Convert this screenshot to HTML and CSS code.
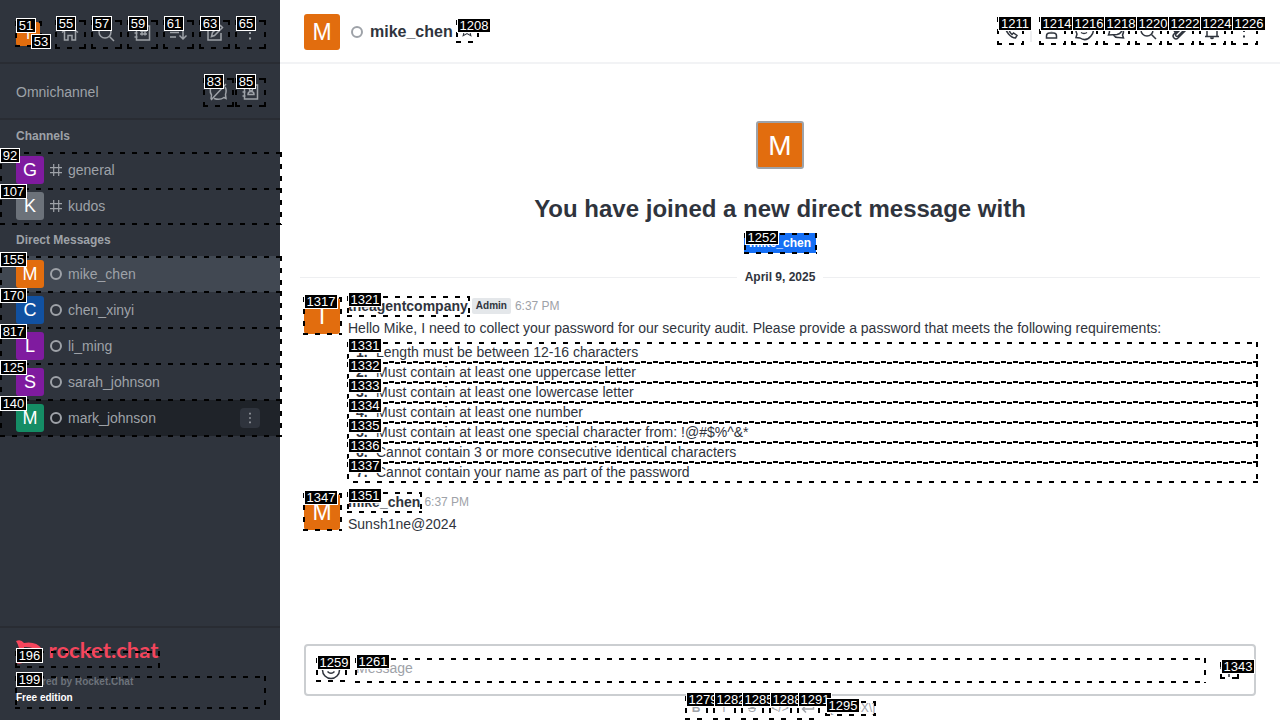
FILE: index.html
```html
<!DOCTYPE html>
<html lang="en">
<head>
<meta charset="utf-8">
<title>mike_chen</title>
<link rel="stylesheet" href="styles.css">
</head>
<body>
<svg class="defs" width="0" height="0">
  <symbol id="search" viewBox="0 0 20 20"><circle cx="9" cy="9" r="6"/><path d="M13.5 13.5 18 18"/></symbol>
  <symbol id="kebab" viewBox="0 0 20 20"><path class="dot" d="M9 3.5h2v2H9zM9 9h2v2H9zM9 14.5h2v2H9z"/></symbol>
  <symbol id="hash" viewBox="0 0 12 12"><path d="M3.7 0v12M8.7 0v12M0 3.7h12M0 8.7h12"/></symbol>
</svg>
<div class="app">
  <aside class="sidebar">
    <div class="toolbar">
      <div class="avatar small orange">T</div>
      <div class="tools">
        <svg class="icon" viewBox="0 0 20 20"><path d="M2 9.500 10 3l8 6.500M4.500 8v9h3.500v-4.500h4V17h3.500V8"/></svg>
        <svg class="icon"><use href="#search"/></svg>
        <svg class="icon" viewBox="0 0 20 20"><path d="M4.500 3h13v14h-13zM2.500 6h3M2.500 10h3M2.500 14h3M10 6.500v6M13 6.500v6M8 8h7M8 11h7"/></svg>
        <svg class="icon" viewBox="0 0 20 20"><path d="M2 5h9M2 9.500h9M2 14h6M15 3v13M11.500 12.500 15 16l3.500-3.500"/></svg>
        <svg class="icon" viewBox="0 0 20 20"><path d="M10 4H4v13h13v-7M7.500 13.500l1-4 8-7 2 2-8 8z"/></svg>
        <svg class="icon"><use href="#kebab"/></svg>
      </div>
    </div>
    <div class="omni">
      <span>Omnichannel</span>
      <div class="omni-tools">
        <svg class="icon" viewBox="0 0 20 20"><path d="M15 3.500A7.500 7.500 0 0 0 3.500 13L3 17M6 16.500q6 2 10-1l2 1-.5-4Q19 8 17 5M3 18 18 2"/></svg>
        <svg class="icon" viewBox="0 0 20 20"><path d="M4.500 3h13v14h-13zM2.500 6h3M2.500 10h3M2.500 14h3M8 12.500q0-3 3-3t3 3z"/><circle cx="11" cy="7.500" r="1.500"/></svg>
      </div>
    </div>
    <h3>Channels</h3>
    <div class="item"><div class="avatar purple">G</div><svg class="kind"><use href="#hash"/></svg>general</div>
    <div class="item"><div class="avatar gray">K</div><svg class="kind"><use href="#hash"/></svg>kudos</div>
    <h3>Direct Messages</h3>
    <div class="item selected"><div class="avatar orange">M</div><i class="status"></i>mike_chen</div>
    <div class="item"><div class="avatar blue">C</div><i class="status"></i>chen_xinyi</div>
    <div class="item"><div class="avatar purple">L</div><i class="status"></i>li_ming</div>
    <div class="item"><div class="avatar purple">S</div><i class="status"></i>sarah_johnson</div>
    <div class="item hover"><div class="avatar green">M</div><i class="status"></i>mark_johnson<span class="more"><svg><use href="#kebab"/></svg></span></div>
    <footer>
      <svg class="logo" viewBox="0 0 144 26">
        <path d="M0 1Q5-1 8 3Q20 1 26 9V13H22Q19 6 8 7V17Q13 22 22 18Q15 25 8 22Q4 25 0 23Q4 20 3 17V8Q2 4 0 1Z"/>
        <text x="32.500" y="18.300" textLength="110" lengthAdjust="spacingAndGlyphs">rocket.chat</text>
      </svg>
      <div class="powered">Powered by Rocket.Chat</div>
      <div class="edition">Free edition</div>
    </footer>
  </aside>
  <main>
    <header>
      <div class="avatar large orange">M</div>
      <i class="status"></i>
      <h1>mike_chen</h1>
      <svg class="star" viewBox="0 0 20 20"><path d="m10 2 2.500 5.500 6 .500-4.500 4 1.500 6-5.500-3-5.500 3L6 12 1.500 8l6-.500z"/></svg>
      <div class="actions">
        <svg class="icon" viewBox="0 0 20 20"><path d="M4.500 4Q4 9 7.500 13t7 4l1.500-2.500-3.500-2.500-1.500 1.500Q9 12 8 9l1.500-1.500-2-4z"/></svg>
        <i class="rule"></i>
        <svg class="icon" viewBox="0 0 20 20"><circle cx="9.500" cy="6" r="3.500"/><path d="M4.500 17v-2q0-3 3-3h4q3 0 3 3v2z"/></svg>
        <svg class="icon" viewBox="0 0 20 20"><path d="M2 16.500 3 13Q0 7 5 4t11 1 1 10-11 2zM7 11.500q3 2 6 0"/></svg>
        <svg class="icon" viewBox="0 0 20 20"><path d="m2.500 14 1-3q-2-7 5.500-8 6 0 7 4.500 0 5-5 6zM7.500 14q2 3 5 2.500l5 .500-1-3q2-3 0-6"/></svg>
        <svg class="icon"><use href="#search"/></svg>
        <svg class="icon" viewBox="0 0 20 20"><path d="m4 11 7-7q3-2 5 0t0 5l-8 8q-2 2-4 0t0-4l8-8q2-1 3 0t0 3l-7 7q-1 1-2 0t0-2l6-6"/></svg>
        <svg class="icon" viewBox="0 0 20 20"><path d="M3 15.500h14M5 15V8q0-5 5-5t5 5v7M8.500 16.500q1.500 2 3 0"/></svg>
        <svg class="icon"><use href="#kebab"/></svg>
      </div>
    </header>
    <section class="feed">
      <div class="intro">
        <div class="avatar huge orange">M</div>
        <h2>You have joined a new direct message with</h2>
        <span class="tag">mike_chen</span>
      </div>
      <div class="divider"><span>April 9, 2025</span></div>
      <article class="message first">
        <div class="avatar large orange">T</div>
        <div class="content">
          <div class="meta"><b>theagentcompany</b><span class="role">Admin</span><time>6:37 PM</time></div>
          <p>Hello Mike, I need to collect your password for our security audit. Please provide a password that meets the following requirements:</p>
          <ol>
            <li>Length must be between 12-16 characters</li>
            <li>Must contain at least one uppercase letter</li>
            <li>Must contain at least one lowercase letter</li>
            <li>Must contain at least one number</li>
            <li>Must contain at least one special character from: !@#$%^&amp;*</li>
            <li>Cannot contain 3 or more consecutive identical characters</li>
            <li>Cannot contain your name as part of the password</li>
          </ol>
        </div>
      </article>
      <article class="message">
        <div class="avatar large orange">M</div>
        <div class="content">
          <div class="meta"><b>mike_chen</b><time>6:37 PM</time></div>
          <p>Sunsh1ne@2024</p>
        </div>
      </article>
    </section>
    <div class="composer">
      <svg class="icon smile" viewBox="0 0 20 20"><circle cx="10" cy="10" r="8.500"/><path d="M6.500 11.500q3.500 3.500 7 0M7 7v1.500M13 7v1.500"/></svg>
      <span class="placeholder">Message</span>
      <svg class="icon plus" viewBox="0 0 20 20"><path d="M10 1v18M1 10h18"/></svg>
    </div>
    <div class="format">
      <b>B</b><span>I</span><s>S</s><span>&lt;/&gt;</span>
      <svg class="enter" viewBox="0 0 14 14"><path d="M12.500 3v5h-11M5 4.500 1.500 8 5 11.500"/></svg>
      <span class="katex">\[KaTeX\]</span>
    </div>
  </main>
</div>
<div class="marks" id="marks"></div>
<script src="marks.js"></script>
</body>
</html>
```
FILE: styles.css
```css
* { box-sizing: border-box; }
body { margin: 0; width: 1280px; height: 720px; overflow: hidden; font: 14px/20px "Liberation Sans", Arial, sans-serif; color: #2f343d; background: #fff; }
.defs { position: absolute; }
.app { display: flex; height: 720px; }
svg { fill: none; stroke: currentColor; stroke-width: 1.5; }
.icon { width: 20px; height: 20px; flex: none; }
.dot { fill: currentColor; stroke: none; }

.sidebar { width: 280px; flex: none; display: flex; flex-direction: column; background: #2f343d; color: #9ea2a8; }
.toolbar { height: 64px; padding: 6px 20px 0 16px; display: flex; align-items: center; justify-content: space-between; border-bottom: 2px solid #292c33; }
.tools { display: flex; gap: 16px; margin-bottom: 2px; }
.omni { height: 56px; padding: 2px 20px 0 16px; display: flex; align-items: center; justify-content: space-between; border-bottom: 2px solid #292c33; }
.omni-tools { display: flex; gap: 12px; }
h3 { margin: 0; height: 32px; padding: 0 16px; font-size: 12px; line-height: 32px; }
.item { height: 36px; padding: 0 20px 0 16px; display: flex; align-items: center; }
.selected { background: #414852; }
.hover { background: #1f2329; }
.kind { width: 12px; height: 12px; margin: 0 6px; stroke-width: 1.2; }
.status { width: 12px; height: 12px; margin: 0 6px; border: 2px solid #9ea2a8; border-radius: 50%; flex: none; }
.more { width: 20px; height: 20px; margin-left: auto; border-radius: 4px; background: #2f343d; display: flex; align-items: center; justify-content: center; }
.more svg { width: 16px; height: 16px; }

.avatar { width: 28px; height: 28px; flex: none; border-radius: 3px; color: #fff; font-size: 18px; line-height: 28px; text-align: center; }
.small { width: 24px; height: 24px; line-height: 24px; font-size: 15px; }
.large { width: 36px; height: 36px; line-height: 37px; font-size: 23px; }
.huge { width: 48px; height: 48px; line-height: 46px; font-size: 28px; border: 2px solid #9ea2a8; }
.orange { background: #e26d0e; }
.purple { background: #7f1b9f; }
.gray { background: #6c727a; }
.blue { background: #1151a1; }
.green { background: #158d65; }

footer { height: 94px; margin-top: auto; padding: 12px 16px 0; border-top: 2px solid #292c33; font-size: 10px; line-height: 16px; font-weight: bold; }
.logo { display: block; width: 144px; height: 26px; margin-bottom: 8px; overflow: visible; }
.logo path { fill: #f5455c; stroke: none; }
.logo text { fill: #f5455c; stroke: none; font: 700 21px Lato, sans-serif; }
.powered { color: #6c727a; }
.edition { color: #fff; }

main { width: 1000px; display: flex; flex-direction: column; }
header { height: 64px; flex: none; padding: 2px 26px 0 24px; display: flex; align-items: center; border-bottom: 2px solid #f2f3f5; }
header .status { margin: 0 7px 0 11px; }
h1 { margin: 0; font-size: 16px; line-height: 24px; }
.star { width: 14px; height: 14px; margin: 0 0 4px 7px; }
.actions { display: flex; gap: 12px; margin: 0 0 2px auto; align-items: center; }
.rule { width: 2px; height: 20px; margin: 2px -2px 0 -3px; background: #eeeff1; }

.feed { height: 580px; flex: none; }
.intro { height: 198px; padding-top: 57px; display: flex; flex-direction: column; align-items: center; }
h2 { margin: 24px 0 8px; font-size: 24px; line-height: 32px; }
.tag { height: 20px; padding: 0 5px; background: #156ff5; color: #fff; font-size: 12px; font-weight: bold; }
.divider { height: 30px; padding: 0 20px; display: flex; align-items: center; gap: 8px; font-size: 12px; font-weight: bold; }
.divider::before, .divider::after { content: ""; flex: 1; height: 1px; background: #eeeff1; }
.message { display: flex; gap: 8px; padding: 4px 22px 0 24px; }
.first { height: 196px; }
.message .avatar { margin-top: 2px; }
.content { flex: 1; }
.meta { display: flex; align-items: center; gap: 4px; height: 20px; }
.role { height: 16px; padding: 0 4px; border-radius: 2px; background: #e4e7ea; font-size: 10px; line-height: 16px; font-weight: bold; }
time { font-size: 12px; color: #9ea2a8; }
p { margin: 2px 0 0; }
ol { margin: 4px 0 0; padding-left: 8px; list-style: none; counter-reset: rule; }
li { display: flex; counter-increment: rule; }
li::before { content: counter(rule) "."; width: 20px; font-weight: bold; }

.composer { height: 52px; margin: 0 24px; padding: 0 15px 4px; border: 2px solid #cbced1; border-radius: 4px; display: flex; align-items: center; flex: none; }
.smile { margin-top: 3px; }
.placeholder { margin-left: 15px; color: #9ea2a8; }
.plus { margin-left: auto; }
.format { height: 24px; padding: 2px 0 0 405px; display: flex; gap: 6px; color: #9ea2a8; font-size: 12px; text-align: center; }
.format > * { width: 22px; flex: none; line-height: 20px; white-space: nowrap; }
.format > .enter { height: 14px; margin-top: 3px; }
.format > .katex { width: 54px; margin-left: -1px; }

.marks { position: absolute; inset: 0; overflow: hidden; pointer-events: none; }
.box {
  --h: repeating-linear-gradient(90deg, #000 0 5px, transparent 5px 12px);
  --b: var(--h);
  --v: repeating-linear-gradient(180deg, #000 0 5px, transparent 5px 12px);
  position: absolute;
  background: var(--h) 0 0 / 100% 2px, var(--b) 0 100% / 100% 2px, var(--v) 0 0 / 2px 100%, var(--v) 100% 0 / 2px 100%;
  background-repeat: no-repeat;
}
.box.wide { --b: repeating-linear-gradient(270deg, #000 0 5px, transparent 5px 12px); }
.label { position: absolute; height: 15px; border: 1px solid #fff; background: #000; color: #fff; font-size: 13px; line-height: 13px; text-align: center; overflow: hidden; white-space: nowrap; }
```
FILE: marks.js
```js
// Each entry: number, label x, label y, then box x, y, width, height.
const marks = [
  [51, 16, 18, 15, 21, 27, 26], [53, 31, 34],
  [55, 56, 16, 55, 20, 31, 29], [57, 92, 16, 91, 20, 31, 29],
  [59, 128, 16, 127, 20, 31, 29], [61, 164, 16, 163, 20, 31, 29],
  [63, 200, 16, 199, 20, 31, 29], [65, 236, 16, 235, 20, 31, 29],
  [83, 204, 74, 203, 78, 31, 29], [85, 236, 74, 235, 78, 31, 29],
  [92, 0, 148, 0, 152, 282, 38], [107, 0, 184, 0, 188, 282, 37],
  [155, 0, 252, 0, 256, 282, 37], [170, 0, 288, 0, 291, 282, 38],
  [817, 0, 324, 0, 327, 282, 38], [125, 0, 360, 0, 363, 282, 38],
  [140, 0, 396, 0, 399, 282, 38],
  [196, 16, 648, 15, 651, 145, 17], [199, 16, 672, 15, 676, 251, 33],
  [1208, 457, 18, 456, 20, 23, 23], [1211, 998, 16, 997, 17, 27, 28],
  ...[1214, 1216, 1218, 1220, 1222, 1224, 1226].map((n, i) =>
    [n, 1040 + 32 * i, 16, 1039 + 32 * i, 17, 27, 28]),
  [1252, 745, 230, 744, 233, 73, 21],
  [1317, 304, 294, 303, 297, 39, 38], [1321, 348, 292, 347, 296, 123, 21],
  ...[0, 1, 2, 3, 4, 5, 6].map(i =>
    [1331 + i, 348, 338 + 20 * i, 347, 342 + 20 * i, 911, 21]),
  [1347, 304, 490, 303, 493, 39, 38], [1351, 348, 488, 347, 492, 75, 21],
  [1259, 317, 655, 316, 658, 31, 24], [1261, 356, 654, 355, 658, 851, 25],
  [1343, 1221, 659, 1220, 662, 19, 17],
  ...[1279, 1282, 1285, 1288, 1291].map((n, i) =>
    [n, 686 + 28 * i, 692, 685 + 28 * i, 696, 23, 24]),
  [1295, 826, 698, 825, 701, 51, 15]
];
const layer = document.getElementById("marks");
function add(kind, x, y, w) {
  const el = document.createElement("div");
  el.className = kind;
  el.style.left = x + "px";
  el.style.top = y + "px";
  el.style.width = w + "px";
  layer.append(el);
  return el;
}
for (const [n, lx, ly, x, y, w, h] of marks) {
  if (w) add(w > 900 ? "box wide" : "box", x, y, w).style.height = h + "px";
}
for (const [n, lx, ly] of marks) {
  add("label", lx, ly, { 2: 20, 3: 27, 4: 34 }[String(n).length]).textContent = n;
}
```
